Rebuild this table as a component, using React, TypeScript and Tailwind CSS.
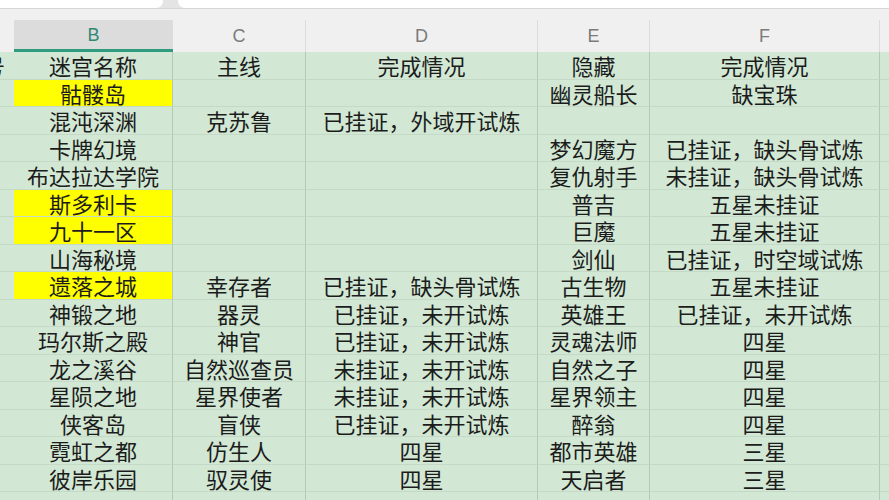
import React from 'react';

type Row = {
  a?: string;
  b: string;
  c?: string;
  d?: string;
  e?: string;
  f?: string;
  yellow?: boolean;
};

const rows: Row[] = [
  { a: '号', b: '迷宫名称', c: '主线', d: '完成情况', e: '隐藏', f: '完成情况' },
  { b: '骷髅岛', e: '幽灵船长', f: '缺宝珠', yellow: true },
  { b: '混沌深渊', c: '克苏鲁', d: '已挂证，外域开试炼' },
  { b: '卡牌幻境', e: '梦幻魔方', f: '已挂证，缺头骨试炼' },
  { b: '布达拉达学院', e: '复仇射手', f: '未挂证，缺头骨试炼' },
  { b: '斯多利卡', e: '普吉', f: '五星未挂证', yellow: true },
  { b: '九十一区', e: '巨魔', f: '五星未挂证', yellow: true },
  { b: '山海秘境', e: '剑仙', f: '已挂证，时空域试炼' },
  { b: '遗落之城', c: '幸存者', d: '已挂证，缺头骨试炼', e: '古生物', f: '五星未挂证', yellow: true },
  { b: '神锻之地', c: '器灵', d: '已挂证，未开试炼', e: '英雄王', f: '已挂证，未开试炼' },
  { b: '玛尔斯之殿', c: '神官', d: '已挂证，未开试炼', e: '灵魂法师', f: '四星' },
  { b: '龙之溪谷', c: '自然巡查员', d: '未挂证，未开试炼', e: '自然之子', f: '四星' },
  { b: '星陨之地', c: '星界使者', d: '未挂证，未开试炼', e: '星界领主', f: '四星' },
  { b: '侠客岛', c: '盲侠', d: '已挂证，未开试炼', e: '醉翁', f: '四星' },
  { b: '霓虹之都', c: '仿生人', d: '四星', e: '都市英雄', f: '三星' },
  { b: '彼岸乐园', c: '驭灵使', d: '四星', e: '天启者', f: '三星' },
];

const cols = 'grid grid-cols-[14px_159px_133px_232px_112px_230px_1fr]';

function Cell({ text, className = '' }: { text?: string; className?: string }) {
  return (
    <div
      className={`flex h-[27.5px] items-center justify-center whitespace-nowrap border-b border-[#c4dac7] ${className}`}
    >
      {text && <span className="leading-[24px]">{text}</span>}
    </div>
  );
}

export default function App() {
  return (
    <div
      className="h-[500px] w-[889px] overflow-hidden bg-[#d2e8d4] text-[#1c1c1c]"
      style={{ fontFamily: '"Noto Sans CJK SC", "Noto Sans", sans-serif' }}
    >
      {/* tab strip */}
      <div className="flex h-[9px] border-b border-[#d6d6d6] bg-[#e4e4e4]">
        <div className="w-[163px] rounded-br-[7px] bg-white" />
        <div className="ml-[15px] flex-1 rounded-bl-[7px] bg-white" />
      </div>

      {/* column letters */}
      <div className="bg-[#f0f0f0] pt-[11px]">
        <div
          className={`${cols} h-[32px] text-[18px] text-[#7b7b7b]`}
          style={{ fontFamily: '"Liberation Sans", Arial, sans-serif' }}
        >
          <div />
          <div className="flex items-center justify-center border-b-[3px] border-[#2f9c7f] bg-[#dcdcdc] pt-[2px] text-[#2e8a73]">
            B
          </div>
          <div className="flex items-center justify-center border-r border-[#dcdcdc]">C</div>
          <div className="flex items-center justify-center border-r border-[#dcdcdc]">D</div>
          <div className="flex items-center justify-center border-r border-[#dcdcdc]">E</div>
          <div className="flex items-center justify-center border-r border-[#dcdcdc]">F</div>
          <div />
        </div>
      </div>

      {/* sheet body */}
      <div className="text-[22px]">
        {rows.map((r, i) => (
          <div key={i} className={cols}>
            <div className="flex h-[27.5px] items-center justify-end overflow-hidden whitespace-nowrap border-b border-[#c4dac7] pr-[9px]">
              {r.a && <span className="leading-[24px]">{r.a}</span>}
            </div>
            <Cell
              text={r.b}
              className={`border-r border-r-[#b3c8b6] ${r.yellow ? 'bg-[#ffff00]' : ''}`}
            />
            <Cell text={r.c} className="border-r border-r-[#b3c8b6]" />
            <Cell text={r.d} className="border-r border-r-[#b3c8b6]" />
            <Cell text={r.e} className="border-r border-r-[#b3c8b6]" />
            <Cell text={r.f} className="border-r border-r-[#b3c8b6]" />
            <Cell />
          </div>
        ))}
        <div className={cols}>
          <Cell />
          <Cell className="border-r border-r-[#b3c8b6]" />
          <Cell className="border-r border-r-[#b3c8b6]" />
          <Cell className="border-r border-r-[#b3c8b6]" />
          <Cell className="border-r border-r-[#b3c8b6]" />
          <Cell className="border-r border-r-[#b3c8b6]" />
          <Cell />
        </div>
      </div>
    </div>
  );
}
